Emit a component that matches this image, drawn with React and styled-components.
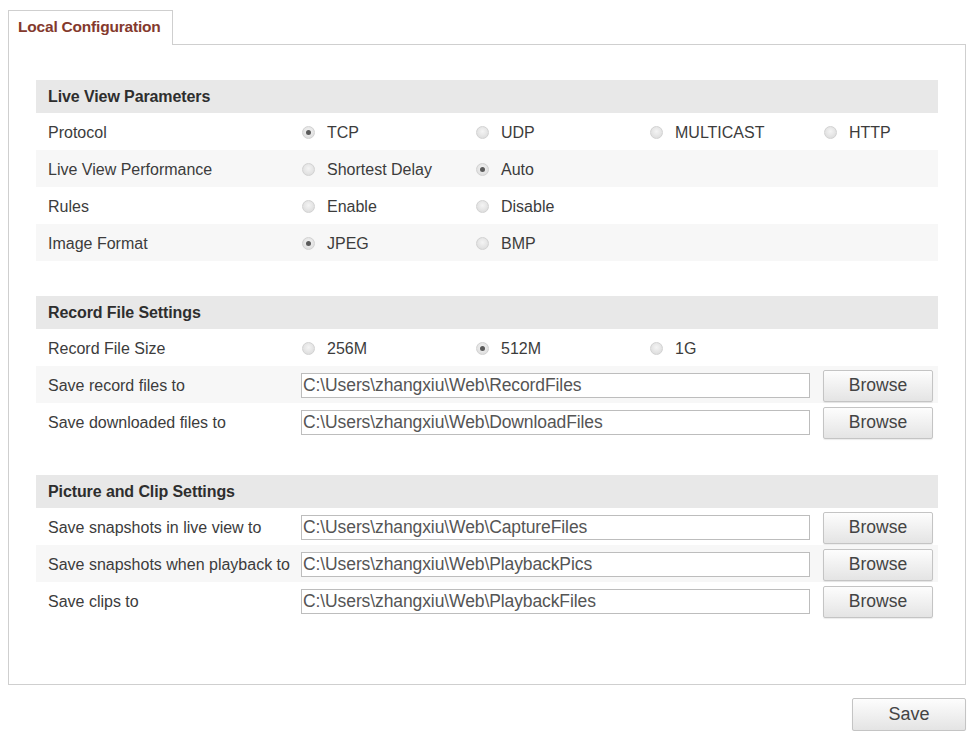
import React from 'react';
import styled, { createGlobalStyle } from 'styled-components';

const GlobalStyle = createGlobalStyle`
  html, body {
    margin: 0;
    padding: 0;
    background: #fff;
  }
  body {
    font-family: "Liberation Sans", Arial, sans-serif;
    font-size: 16px;
    color: #3c3c3c;
  }
`;

const Page = styled.div`
  width: 976px;
  padding: 10px 10px 0 8px;
  box-sizing: border-box;
`;

const TabBar = styled.div`
  display: flex;
  height: 35px;
`;

const Tab = styled.div`
  position: relative;
  z-index: 1;
  width: 165px;
  height: 35px;
  box-sizing: border-box;
  border: 1px solid #cfcfcf;
  border-bottom: none;
  background: #fff;
  color: #84392d;
  font-weight: bold;
  font-size: 15.5px;
  padding: 7px 0 0 9px;
  letter-spacing: -0.2px;
`;

const Panel = styled.div`
  margin-top: -1px;
  border: 1px solid #cfcfcf;
  height: 641px;
  box-sizing: border-box;
  padding: 35px 27px 0 27px;
  display: flex;
  flex-direction: column;
  gap: 35px;
`;

const Section = styled.section`
  display: flex;
  flex-direction: column;
`;

const SectionHeader = styled.div`
  height: 33px;
  display: flex;
  align-items: center;
  padding: 1px 0 0 12px;
  box-sizing: border-box;
  background: #e8e8e8;
  font-weight: bold;
  color: #2e2e2e;
  letter-spacing: -0.1px;
`;

const Row = styled.div`
  height: 37px;
  box-sizing: border-box;
  display: flex;
  align-items: center;
  padding: 2px 0 0 12px;
  &:nth-of-type(odd) {
    background: #f7f7f7;
  }
`;

const Label = styled.div`
  width: 252px;
  flex: none;
  white-space: nowrap;
  color: #3c3c3c;
`;

const Option = styled.label`
  width: 174px;
  flex: none;
  display: flex;
  align-items: center;
  gap: 12px;
  color: #3c3c3c;
  padding-left: 2px;
  box-sizing: border-box;
`;

const Dot = styled.span`
  width: 13px;
  height: 13px;
  border-radius: 50%;
  box-sizing: border-box;
  border: 1px solid #d2d2d2;
  background: radial-gradient(circle at 50% 40%, #f4f4f4 0%, #d8d8d8 100%);
  display: flex;
  align-items: center;
  justify-content: center;
  &::after {
    content: '';
    width: 5px;
    height: 5px;
    border-radius: 50%;
    background: ${p => (p.$checked ? '#5a5a5a' : 'transparent')};
  }
`;

const PathInput = styled.input`
  width: 509px;
  height: 25px;
  box-sizing: border-box;
  margin-left: 1px;
  border: 1px solid #bdbdbd;
  padding: 0 1px;
  font-family: "Liberation Sans", Arial, sans-serif;
  font-size: 17.5px;
  letter-spacing: -0.1px;
  color: #555;
  background: #fff;
  outline: none;
`;

const Button = styled.button`
  width: ${p => p.$width || 110}px;
  height: ${p => p.$height || 32}px;
  border: 1px solid #c4c4c4;
  border-radius: 2px;
  background: linear-gradient(#fdfdfd, #e4e4e4);
  font-family: "Liberation Sans", Arial, sans-serif;
  font-size: ${p => p.$size || 17.5}px;
  color: #444;
  padding: 0;
  margin-left: ${p => p.$gap || 0}px;
  box-shadow: 0 1px 1px rgba(0, 0, 0, 0.08);
`;

const Footer = styled.div`
  display: flex;
  justify-content: flex-end;
  padding-top: 13px;
`;

const radioRows = [
  { label: 'Protocol', options: ['TCP', 'UDP', 'MULTICAST', 'HTTP'], checked: 0 },
  { label: 'Live View Performance', options: ['Shortest Delay', 'Auto'], checked: 1 },
  { label: 'Rules', options: ['Enable', 'Disable'], checked: -1 },
  { label: 'Image Format', options: ['JPEG', 'BMP'], checked: 0 },
];

const root = 'C:\\Users\\zhangxiu\\Web\\';

function RadioRow({ label, options, checked }) {
  return (
    <Row>
      <Label>{label}</Label>
      {options.map((o, i) => (
        <Option key={o}>
          <Dot $checked={i === checked} />
          {o}
        </Option>
      ))}
    </Row>
  );
}

function PathRow({ label, folder }) {
  return (
    <Row>
      <Label>{label}</Label>
      <PathInput readOnly value={root + folder} />
      <Button $gap={13}>Browse</Button>
    </Row>
  );
}

export default function App() {
  return (
    <Page>
      <GlobalStyle />
      <TabBar>
        <Tab>Local Configuration</Tab>
      </TabBar>
      <Panel>
        <Section>
          <SectionHeader>Live View Parameters</SectionHeader>
          {radioRows.map(r => (
            <RadioRow key={r.label} {...r} />
          ))}
        </Section>
        <Section>
          <SectionHeader>Record File Settings</SectionHeader>
          <RadioRow label="Record File Size" options={['256M', '512M', '1G']} checked={1} />
          <PathRow label="Save record files to" folder="RecordFiles" />
          <PathRow label="Save downloaded files to" folder="DownloadFiles" />
        </Section>
        <Section>
          <SectionHeader>Picture and Clip Settings</SectionHeader>
          <PathRow label="Save snapshots in live view to" folder="CaptureFiles" />
          <PathRow label="Save snapshots when playback to" folder="PlaybackPics" />
          <PathRow label="Save clips to" folder="PlaybackFiles" />
        </Section>
      </Panel>
      <Footer>
        <Button $width={114} $height={33} $size={18}>Save</Button>
      </Footer>
    </Page>
  );
}
